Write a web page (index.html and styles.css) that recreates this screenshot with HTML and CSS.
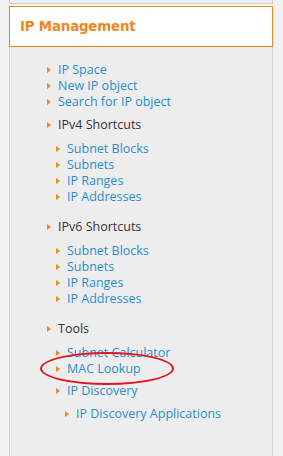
FILE: index.html
```html
<!DOCTYPE html>
<html>
<head>
<meta charset="utf-8">
<link rel="stylesheet" href="styles.css">
</head>
<body>
<div class="page">
  <div class="prev-panel"></div>
  <div class="header"><h2 class="title">IP Management</h2></div>
  <div class="panel">
    <ul class="menu">
      <li class="item"><a class="link" href="#">IP Space</a></li>
      <li class="item"><a class="link" href="#">New IP object</a></li>
      <li class="item"><a class="link" href="#">Search for IP object</a></li>
      <li class="item section first-section"><span class="label">IPv4 Shortcuts</span>
        <ul class="sub">
          <li class="item"><a class="link" href="#">Subnet Blocks</a></li>
          <li class="item"><a class="link" href="#">Subnets</a></li>
          <li class="item"><a class="link" href="#">IP Ranges</a></li>
          <li class="item"><a class="link" href="#">IP Addresses</a></li>
        </ul>
      </li>
      <li class="item section"><span class="label">IPv6 Shortcuts</span>
        <ul class="sub">
          <li class="item"><a class="link" href="#">Subnet Blocks</a></li>
          <li class="item"><a class="link" href="#">Subnets</a></li>
          <li class="item"><a class="link" href="#">IP Ranges</a></li>
          <li class="item"><a class="link" href="#">IP Addresses</a></li>
        </ul>
      </li>
      <li class="item section"><span class="label">Tools</span>
        <ul class="sub">
          <li class="item"><a class="link" href="#">Subnet Calculator</a></li>
          <li class="item marked"><a class="link" href="#">MAC Lookup</a><span class="circle"></span></li>
          <li class="item group"><a class="link" href="#">IP Discovery</a>
            <ul class="sub">
              <li class="item"><a class="link" href="#">IP Discovery Applications</a></li>
            </ul>
          </li>
        </ul>
      </li>
    </ul>
  </div>
</div>
</body>
</html>
```
FILE: styles.css
```css
html, body {
  margin: 0;
  padding: 0;
  background: #f1f1f1;
}
.page {
  width: 264px;
  margin-left: 9px;
  height: 456px;
  display: flex;
  flex-direction: column;
}
.prev-panel {
  border: 1px solid #cfcfcf;
  border-top: none;
  background: #efefef;
  box-sizing: border-box;
  height: 4px;
}
.header {
  margin-top: 2px;
  height: 41px;
  box-sizing: border-box;
  border: 1px solid #f0861e;
  background: #ffffff;
  display: flex;
  align-items: center;
  padding-left: 10px;
}
.title {
  margin: 0;
  font-family: "DejaVu Sans", Verdana, sans-serif;
  font-weight: bold;
  font-size: 13.4px;
  color: #f0861e;
  letter-spacing: -0.2px;
}
.panel {
  flex: 1;
  background: #ededed;
  border-left: 1px solid #d2d2d2;
  border-right: 1px solid #d2d2d2;
  padding-top: 15px;
}
.menu, .sub {
  list-style: none;
  margin: 0;
  padding: 0;
}
.menu {
  padding-left: 37px;
}
.sub {
  margin-left: -2px;
  margin-top: 8px;
}
.item {
  position: relative;
  padding-left: 11px;
  line-height: 16px;
  font-family: "Open Sans", sans-serif;
  font-size: 12.5px;
}
.item::before {
  content: "";
  position: absolute;
  left: 0;
  top: 5px;
  border-left: 4px solid #f0861e;
  border-top: 3px solid transparent;
  border-bottom: 3px solid transparent;
}
.link {
  color: #2b8fcf;
  text-decoration: none;
}
.label {
  color: #333333;
}
.section {
  margin-top: 14px;
}
.first-section {
  margin-top: 7px;
}
.group {
  margin-top: 6px;
}
.group > .sub {
  margin-top: 7px;
}
.circle {
  position: absolute;
  left: -16px;
  top: -9px;
  width: 134px;
  height: 33px;
  box-sizing: border-box;
  border: 2px solid #e3141f;
  border-radius: 50%;
}
```
